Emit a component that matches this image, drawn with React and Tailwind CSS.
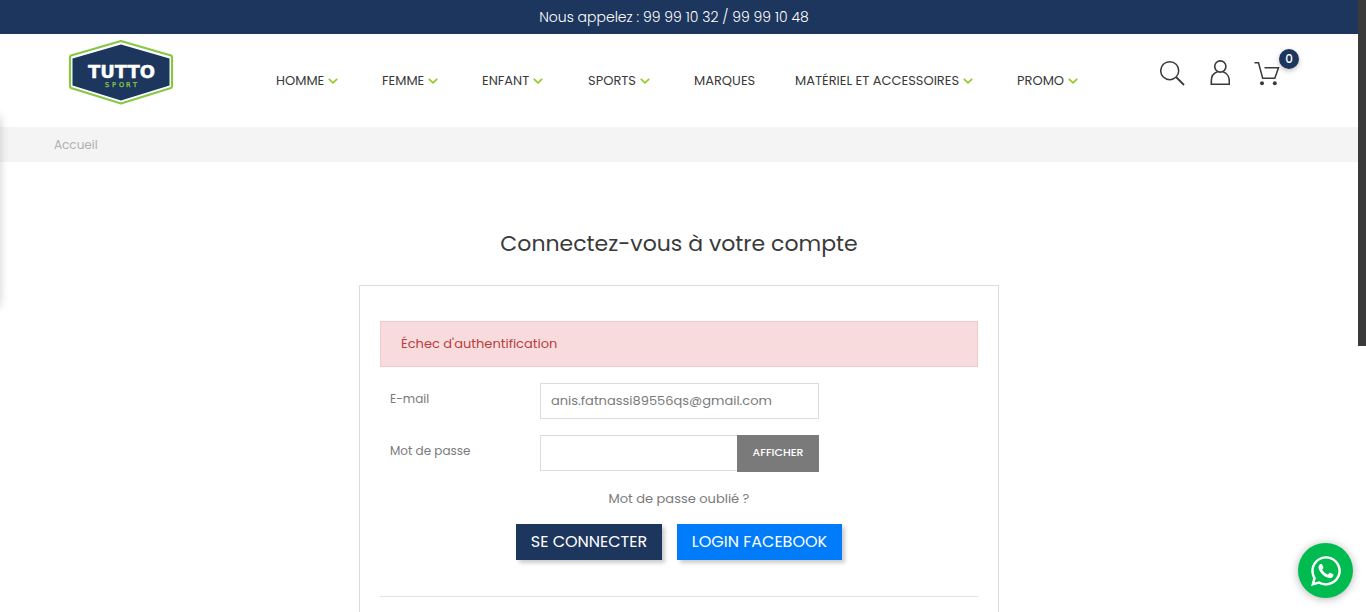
import { useState } from "react";
import { FaWhatsapp } from "react-icons/fa";

const NAV = [
  { label: "HOMME", menu: true },
  { label: "FEMME", menu: true },
  { label: "ENFANT", menu: true },
  { label: "SPORTS", menu: true },
  { label: "MARQUES", menu: false },
  { label: "MATÉRIEL ET ACCESSOIRES", menu: true },
  { label: "PROMO", menu: true },
];

function Chevron() {
  return (
    <svg className="h-[6px] w-[10px] shrink-0" viewBox="0 0 10 6" fill="none" stroke="#96cc2b" strokeWidth="1.8" aria-hidden="true">
      <path d="M0.8 0.8 5 4.8 9.2 0.8" />
    </svg>
  );
}

function Logo() {
  return (
    <svg className="h-[66px] w-[106px]" viewBox="0 0 106 66" role="img" aria-label="Tutto Sport">
      <path d="M53 2 103 16.5Q104 17 104 18V47Q104 48.500 103 49L53 64.500 3 49Q2 48.500 2 47V18Q2 17 3 16.500Z" fill="#fff" stroke="#86c843" strokeWidth="2.2" strokeLinejoin="round" />
      <path d="M53 5.500 101.500 19.500V46.500L53 61.500 4.500 46.500V19.500Z" fill="#1d365d" />
      <text x="53.500" y="39" textAnchor="middle" fill="#fff" stroke="#fff" strokeWidth="0.400" fontFamily="DejaVu Sans, sans-serif" fontWeight="700" fontSize="18">TUTTO</text>
      <text x="37 44 51 58 65" y="48" fill="#86c843" stroke="#86c843" strokeWidth="0.300" fontFamily="DejaVu Sans, sans-serif" fontSize="6.500">SPORT</text>
    </svg>
  );
}

function SearchIcon() {
  return (
    <svg className="size-[26px]" viewBox="0 0 26 26" fill="none" stroke="#3a3a3a" strokeWidth="1.5" aria-hidden="true">
      <circle cx="9.700" cy="10.700" r="9" />
      <path d="m16 17 8 8" strokeWidth="1.800" />
    </svg>
  );
}

function UserIcon() {
  return (
    <svg className="h-[26px] w-[20px]" viewBox="0 0 20 26" fill="none" stroke="#3a3a3a" strokeWidth="1.600" aria-hidden="true">
      <circle cx="10.300" cy="6.500" r="5.600" />
      <path d="M7.500 11.800C3.500 13 1.300 17 1.300 21V24.200H19.300V21C19.300 17 17 13 13 11.800" />
    </svg>
  );
}

function CartIcon() {
  return (
    <svg className="h-[26px] w-[26px]" viewBox="0 0 26 26" fill="none" stroke="#3a3a3a" strokeWidth="1.500" aria-hidden="true">
      <path d="M0.500 2.800H4.500L8.700 18.300H20.800L24.500 7.800H10.500" />
      <circle cx="8" cy="23.300" r="2" fill="#3a3a3a" stroke="none" />
      <circle cx="20.800" cy="23.300" r="2" fill="#3a3a3a" stroke="none" />
    </svg>
  );
}

export default function App() {
  const [email, setEmail] = useState("anis.fatnassi89556qs@gmail.com");
  const [password, setPassword] = useState("");
  const [shown, setShown] = useState(false);

  return (
    <div className="relative flex h-screen overflow-hidden bg-white font-[Poppins,Inter,sans-serif] text-[13px] text-[#7a7a7a]">
      <div className="min-w-0 flex-1">
        <div className="bg-[#1d365d] py-[7px] pr-[10px] text-center text-sm font-light leading-5 text-white">
          Nous appelez : 99 99 10 32 / 99 99 10 48
        </div>

        <header className="flex h-[93px] items-start pl-[68px] pr-[78px]">
          <a href="#accueil" className="mt-[5px]">
            <Logo />
          </a>
          <nav className="ml-[102px] mt-[37px]" aria-label="Menu principal">
            <ul className="grid grid-cols-[106px_100px_106px_106px_101px_222px_auto] whitespace-nowrap leading-5 text-[#3a3a3a]">
              {NAV.map((item) => (
                <li key={item.label}>
                  <a href="#menu" className="flex items-center gap-1">
                    {item.label}
                    {item.menu && <Chevron />}
                  </a>
                </li>
              ))}
            </ul>
          </nav>
          <div className="ml-auto mt-[26px] flex items-center gap-6">
            <button type="button" aria-label="Rechercher">
              <SearchIcon />
            </button>
            <a href="#compte" aria-label="Mon compte">
              <UserIcon />
            </a>
            <a href="#panier" aria-label="Panier" className="relative">
              <CartIcon />
              <span className="absolute -top-[11px] left-[25px] flex size-5 items-center justify-center rounded-full bg-[#1d365d] text-xs font-medium text-white shadow-[0_2px_5px_rgba(0,0,0,0.25)]">
                0
              </span>
            </a>
          </div>
        </header>

        <div className="bg-[#f4f4f4] px-[54px] py-2 text-xs leading-[19px] text-[#b0b0b0]">
          <a href="#accueil">Accueil</a>
        </div>

        <main className="px-5 pt-[66px]">
          <h1 className="text-center text-[22px] leading-8 text-[#3a3a3a]">Connectez-vous à votre compte</h1>
          <section className="mx-auto mt-[25px] w-full max-w-[640px] border border-[#dcdcdc] px-5 pt-[35px] pb-16">
            <p role="alert" className="border border-[#f4c8cc] bg-[#f8dcdd] px-5 py-3 leading-5 text-[#b93c3f]">
              Échec d'authentification
            </p>
            <form onSubmit={(e) => e.preventDefault()}>
              <div className="mt-4 grid grid-cols-[150px_279px] pl-[10px]">
                <label htmlFor="email" className="pt-1.5 text-xs leading-5">E-mail</label>
                <input
                  id="email"
                  type="email"
                  value={email}
                  onChange={(e) => setEmail(e.target.value)}
                  className="h-9 min-w-0 border border-[#dcdcdc] px-[10px] outline-none"
                />
              </div>
              <div className="mt-4 grid grid-cols-[150px_279px] pl-[10px]">
                <label htmlFor="password" className="pt-1.5 text-xs leading-5">Mot de passe</label>
                <div className="flex items-start">
                  <input
                    id="password"
                    type={shown ? "text" : "password"}
                    value={password}
                    onChange={(e) => setPassword(e.target.value)}
                    className="h-9 min-w-0 flex-1 border border-r-0 border-[#dcdcdc] px-[10px] outline-none"
                  />
                  <button
                    type="button"
                    onClick={() => setShown(!shown)}
                    className="h-[37px] w-[82px] bg-[#7a7a7a] pb-0.5 text-[11px] font-medium text-white"
                  >
                    AFFICHER
                  </button>
                </div>
              </div>
              <p className="mt-[17px] text-center leading-5">
                <a href="#oubli">Mot de passe oublié ?</a>
              </p>
              <div className="mt-[15px] flex justify-center gap-[15px] text-base text-white">
                <button type="submit" className="h-9 w-[146px] bg-[#1d365d] shadow-[3px_3px_4px_rgba(0,0,0,0.2)]">
                  SE CONNECTER
                </button>
                <button type="button" className="h-9 w-[165px] bg-[#007bf9] shadow-[3px_3px_4px_rgba(0,0,0,0.2)]">
                  LOGIN FACEBOOK
                </button>
              </div>
            </form>
            <hr className="mt-9 border-[#e2e2e2]" />
          </section>
        </main>
      </div>

      <div className="w-2 shrink-0" aria-hidden="true">
        <div className="h-[346px] bg-[#3a3a3a]" />
      </div>

      <div className="absolute -left-2 top-[116px] h-[190px] w-2 shadow-[0_0_10px_rgba(0,0,0,0.2)]" aria-hidden="true" />

      <a
        href="#whatsapp"
        aria-label="WhatsApp"
        className="absolute bottom-[14px] right-[13px] flex size-[55px] items-center justify-center rounded-full bg-[#00bc50] text-white shadow-[0_1px_8px_rgba(0,0,0,0.3)]"
      >
        <FaWhatsapp size={34} />
      </a>
    </div>
  );
}
